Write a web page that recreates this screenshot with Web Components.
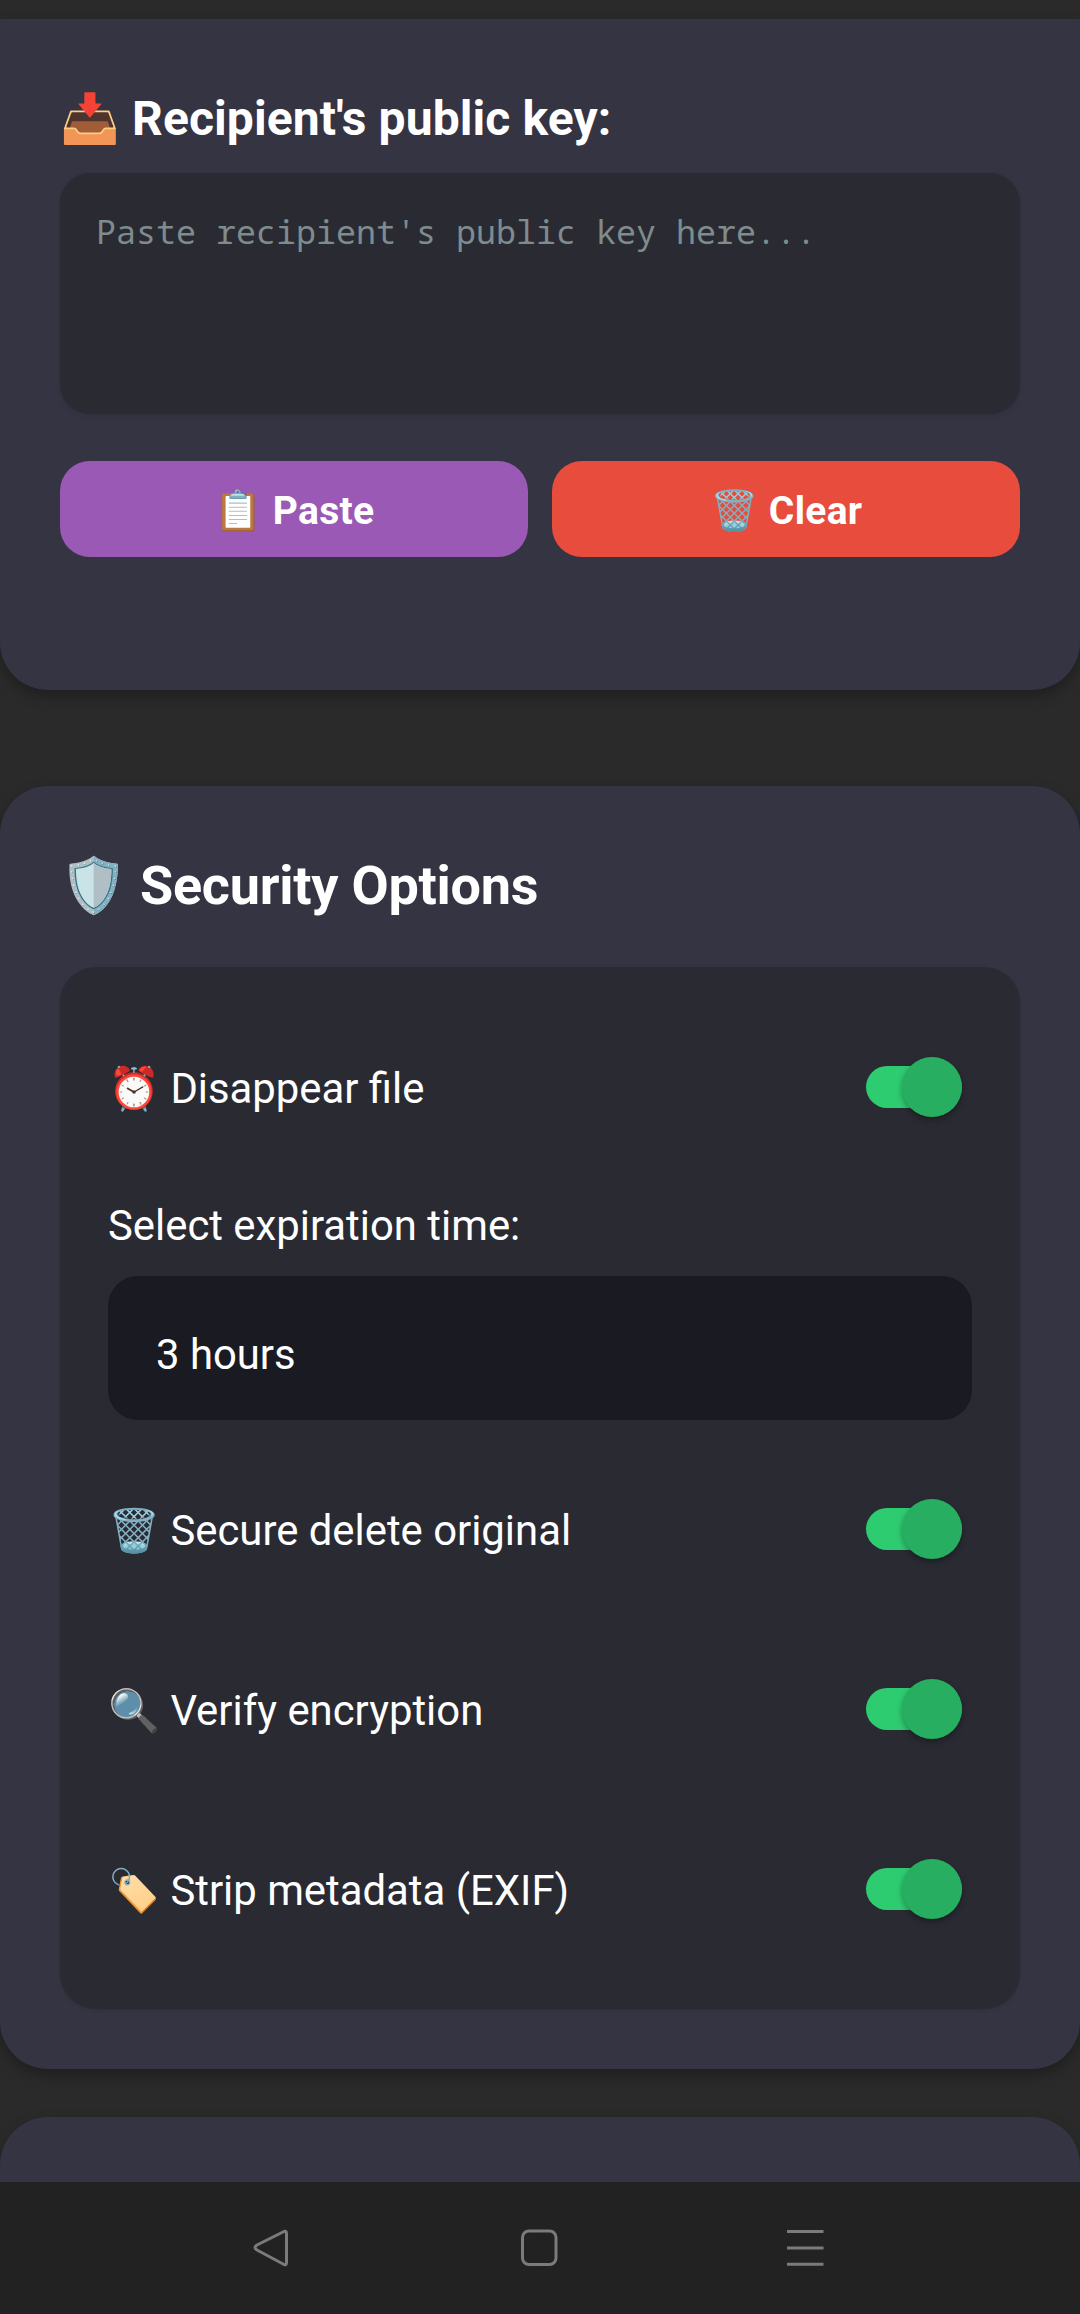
<!DOCTYPE html>
<html lang="en">
<head>
<meta charset="utf-8">
<title>Encryption settings</title>
<style>
html,body{margin:0;background:#2a2a2a}
body{font-family:Roboto,"Noto Sans",sans-serif;color:#fff}
</style>
</head>
<body>
<app-screen></app-screen>
<script>
const define=(name,html)=>customElements.define(name,class extends HTMLElement{
  constructor(){super();this.attachShadow({mode:'open'}).innerHTML=html;}
});

define('ui-label',`<style>
:host{display:flex;align-items:center;white-space:pre;font-size:41.85px;line-height:50px}
:host([size=title]){font-size:54px;line-height:64px;font-weight:700;letter-spacing:-.25px}
:host([size=heading]){font-size:48px;line-height:56px;font-weight:700;letter-spacing:.09px}
:host([size=button]){font-size:39px;line-height:46px;font-weight:700;letter-spacing:.3px;padding-top:3px}
</style><slot></slot>`);

define('ui-card',`<style>
:host{display:block;box-sizing:border-box;background:#353443;border-radius:48px;box-shadow:0 6px 14px rgba(0,0,0,.28);padding:0 60px}
:host([cut=top]){border-top-left-radius:0;border-top-right-radius:0}
</style><slot></slot>`);

define('ui-textarea',`<style>
:host{display:block;height:241px;box-sizing:border-box;padding:36px 36px;background:#2a2a33;border-radius:30px;box-shadow:0 2px 5px rgba(0,0,0,.1);
font:33.35px/44px "Droid Sans Mono","Noto Sans Mono","DejaVu Sans Mono",monospace;color:#7f8c8d;white-space:nowrap}
</style><slot></slot>`);

define('ui-button',`<style>
:host{display:flex;flex:1;height:96px;align-items:center;justify-content:center;border-radius:30px;background:var(--tone)}
</style><ui-label size="button"><slot></slot></ui-label>`);

define('ui-switch',`<style>
:host{display:flex;align-items:center;width:96px;height:60px}
.track{width:96px;height:42px;border-radius:21px;background:#2ecc71;display:flex;align-items:center;justify-content:flex-end}
.thumb{width:60px;height:60px;flex:none;border-radius:50%;background:#27ae60;box-shadow:0 3px 6px rgba(0,0,0,.32)}
</style><div class="track"><div class="thumb"></div></div>`);

define('ui-option',`<style>
:host{display:flex;height:144px;align-items:center;justify-content:space-between;padding-right:10px}
ui-label{padding-top:4px}
</style><ui-label><slot></slot></ui-label><ui-switch></ui-switch>`);

define('ui-select',`<style>
:host{display:flex;align-items:center;height:144px;box-sizing:border-box;padding:14px 48px 0;background:#1a1a22;border-radius:30px}
</style><ui-label><slot></slot></ui-label>`);

define('nav-bar',`<style>
:host{display:flex;height:132px;background:#222;justify-content:center;align-items:center}
svg{display:block}
</style><svg width="1080" height="132" fill="none" stroke="#7b7b7b" stroke-width="3" stroke-linejoin="round">
<path d="M284 49.500 257 63q-4 2.500 0 5l27 14.500q2.500 1 2.500-2V51.500q0-3-2.500-2Z"/>
<rect x="522.500" y="49" width="33.500" height="33.500" rx="6.500"/>
<path d="M787 49.500h36.500M787 66h36.500M787 82.300h36.500"/></svg>`);

define('app-screen',`<style>
:host{display:flex;flex-direction:column;width:1080px;height:2314px;overflow:hidden;background:#2a2a2a}
.view{flex:1;min-height:0;overflow:hidden;padding-top:19px}
.recipient{height:671px;padding-top:72px}
.recipient ui-textarea{margin-top:26px}
.buttons{display:flex;gap:24px;margin-top:47px}
.security{height:1283px;margin-top:96px;padding-top:68px}
.panel{background:#2a2a33;border-radius:36px;height:1042px;box-sizing:border-box;padding:48px;margin-top:49px;box-shadow:0 1px 4px rgba(0,0,0,.1)}
.expiry{padding:42px 0 25px}
.panel ui-option + ui-option{margin-top:36px}
.panel ui-select + ui-option{margin-top:37px}
.next{height:300px;margin-top:48px}
</style>
<div class="view">
<ui-card class="recipient" cut="top">
<ui-label size="heading">📥 Recipient's public key:</ui-label>
<ui-textarea>Paste recipient's public key here...</ui-textarea>
<div class="buttons"><ui-button style="--tone:#9b59b6">📋 Paste</ui-button><ui-button style="--tone:#e74c3c">🗑️ Clear</ui-button></div>
</ui-card>
<ui-card class="security">
<ui-label size="title">🛡️ Security Options</ui-label>
<div class="panel">
<ui-option>⏰ Disappear file</ui-option>
<ui-label class="expiry">Select expiration time:</ui-label>
<ui-select>3 hours</ui-select>
<ui-option>🗑️ Secure delete original</ui-option>
<ui-option>🔍 Verify encryption</ui-option>
<ui-option>🏷️ Strip metadata (EXIF)</ui-option>
</div>
</ui-card>
<ui-card class="next"></ui-card>
</div>
<nav-bar></nav-bar>`);
</script>
</body>
</html>
